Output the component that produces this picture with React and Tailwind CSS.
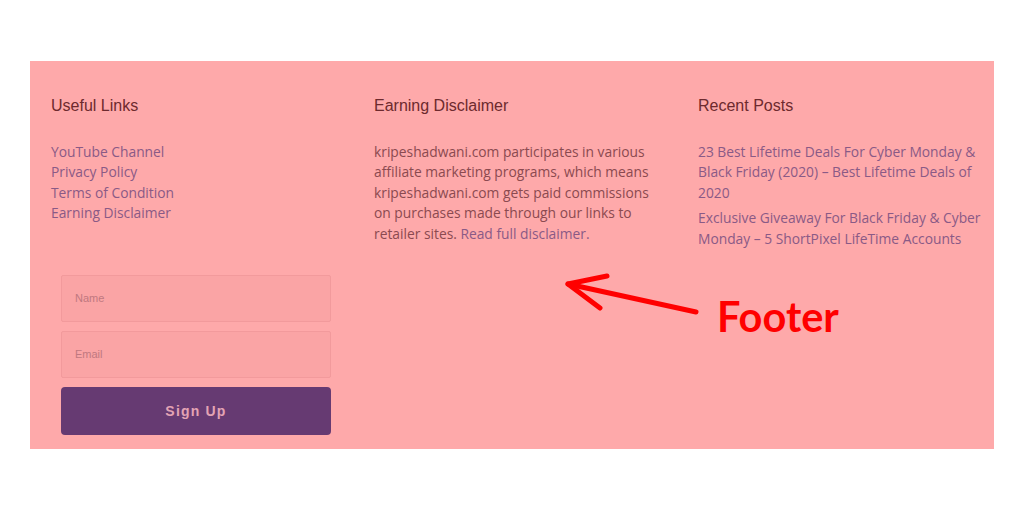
import React from "react";

export default function App() {
  const linkCls = "text-[#8a5a86]";
  return (
    <div className="relative w-[1024px] h-[512px] bg-white pt-[61px] px-[30px]">
      <div className="h-[388px] bg-[#fea9aa] pl-[21px] pt-[36px]">
        <div className="grid grid-cols-[323px_324px_1fr]">
          <div>
            <h3 className="text-[16px] leading-[18px] text-[#6d2a2e] font-['Liberation_Sans',Arial,sans-serif]">Useful Links</h3>
            <ul className="mt-[27px] text-[13.8px] leading-[20.4px] font-['Open_Sans',sans-serif]">
              <li className={linkCls}>YouTube Channel</li>
              <li className={linkCls}>Privacy Policy</li>
              <li className={linkCls}>Terms of Condition</li>
              <li className={linkCls}>Earning Disclaimer</li>
            </ul>
          </div>
          <div>
            <h3 className="text-[16px] leading-[18px] text-[#6d2a2e] font-['Liberation_Sans',Arial,sans-serif]">Earning Disclaimer</h3>
            <p className="mt-[27px] w-[290px] text-[13.8px] leading-[20.4px] text-[#8b4a50] font-['Open_Sans',sans-serif]">
              kripeshadwani.com participates in various affiliate marketing programs, which means kripeshadwani.com gets paid commissions on purchases made through our links to retailer sites. <span className={linkCls}>Read full disclaimer.</span>
            </p>
          </div>
          <div>
            <h3 className="text-[16px] leading-[18px] text-[#6d2a2e] font-['Liberation_Sans',Arial,sans-serif]">Recent Posts</h3>
            <ul className="mt-[27px] w-[290px] text-[13.8px] leading-[20.4px] font-['Open_Sans',sans-serif] flex flex-col gap-[5px]">
              <li className={linkCls}>23 Best Lifetime Deals For Cyber Monday &amp; Black Friday (2020) – Best Lifetime Deals of 2020</li>
              <li className={linkCls}>Exclusive Giveaway For Black Friday &amp; Cyber Monday – 5 ShortPixel LifeTime Accounts</li>
            </ul>
          </div>
        </div>
        <div className="ml-[10px] mt-[26px] w-[270px] flex flex-col gap-[9px] font-['Liberation_Sans',Arial,sans-serif]">
          <div className="h-[47px] border border-[#f29a9c] bg-[#faa4a5] rounded-[2px] flex items-center pl-[13px] text-[11px] text-[#c07880]">Name</div>
          <div className="h-[47px] border border-[#f29a9c] bg-[#faa4a5] rounded-[2px] flex items-center pl-[13px] text-[11px] text-[#c07880]">Email</div>
          <div className="h-[48px] bg-[#663a72] rounded-[4px] flex items-center justify-center text-[14px] font-bold tracking-[1.2px] text-[#e3a3b4]">Sign Up</div>
        </div>
      </div>
      <svg className="absolute left-0 top-0" width="1024" height="512" viewBox="0 0 1024 512">
        <g stroke="#ff0000" strokeWidth="5" strokeLinecap="round" strokeLinejoin="round" fill="none">
          <path d="M696 312 L568 284" />
          <path d="M607 276 L568 284 L600 308" />
        </g>
      </svg>
      <div className="absolute left-[717px] top-[292px] text-[41.5px] leading-[48px] font-bold text-[#ff0000] font-['Lato',sans-serif]">Footer</div>
    </div>
  );
}
